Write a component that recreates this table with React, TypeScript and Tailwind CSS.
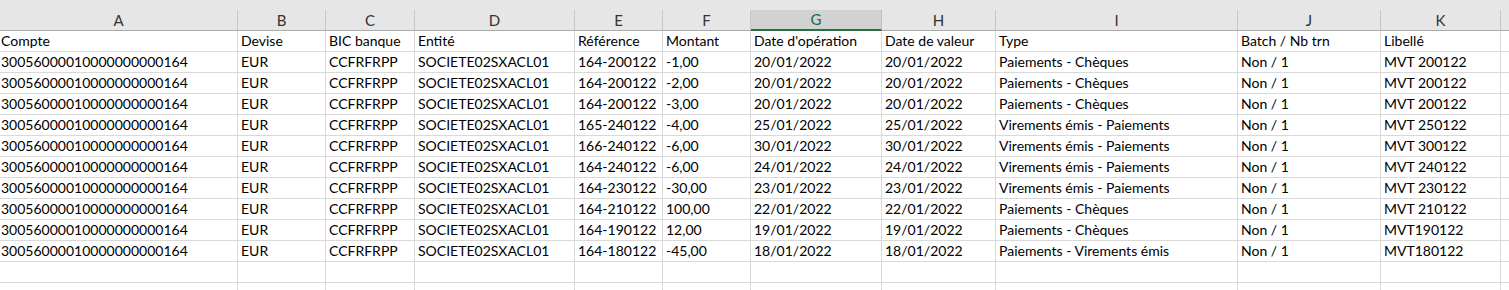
import React from 'react';

type Column = { letter: string; width: string };

const columns: Column[] = [
  { letter: 'A', width: '238px' },
  { letter: 'B', width: '88px' },
  { letter: 'C', width: '89px' },
  { letter: 'D', width: '160px' },
  { letter: 'E', width: '88px' },
  { letter: 'F', width: '88px' },
  { letter: 'G', width: '131px' },
  { letter: 'H', width: '114px' },
  { letter: 'I', width: '242px' },
  { letter: 'J', width: '143px' },
  { letter: 'K', width: '120px' },
];

const headers = [
  'Compte',
  'Devise',
  'BIC banque',
  'Entité',
  'Référence',
  'Montant',
  "Date d'opération",
  'Date de valeur',
  'Type',
  'Batch / Nb trn',
  'Libellé',
];

const ACCOUNT = '30056000010000000000164';

const movements: [string, string, string, string, string, string][] = [
  ['164-200122', '-1,00', '20/01/2022', '20/01/2022', 'Paiements - Chèques', 'MVT 200122'],
  ['164-200122', '-2,00', '20/01/2022', '20/01/2022', 'Paiements - Chèques', 'MVT 200122'],
  ['164-200122', '-3,00', '20/01/2022', '20/01/2022', 'Paiements - Chèques', 'MVT 200122'],
  ['165-240122', '-4,00', '25/01/2022', '25/01/2022', 'Virements émis - Paiements', 'MVT 250122'],
  ['166-240122', '-6,00', '30/01/2022', '30/01/2022', 'Virements émis - Paiements', 'MVT 300122'],
  ['164-240122', '-6,00', '24/01/2022', '24/01/2022', 'Virements émis - Paiements', 'MVT 240122'],
  ['164-230122', '-30,00', '23/01/2022', '23/01/2022', 'Virements émis - Paiements', 'MVT 230122'],
  ['164-210122', '100,00', '22/01/2022', '22/01/2022', 'Paiements - Chèques', 'MVT 210122'],
  ['164-190122', '12,00', '19/01/2022', '19/01/2022', 'Paiements - Chèques', 'MVT190122'],
  ['164-180122', '-45,00', '18/01/2022', '18/01/2022', 'Paiements - Virements émis', 'MVT180122'],
];

const rows: string[][] = [
  headers,
  ...movements.map(([ref, amount, opDate, valDate, type, label]) => [
    ACCOUNT,
    'EUR',
    'CCFRFRPP',
    'SOCIETE02SXACL01',
    ref,
    amount,
    opDate,
    valDate,
    type,
    'Non / 1',
    label,
  ]),
  Array(11).fill(''),
  Array(11).fill(''),
];

const gridTemplate =
  'grid grid-cols-[238px_88px_89px_160px_88px_88px_131px_114px_242px_143px_120px_1fr]';

const ColumnHeader = ({ letter, selected }: { letter: string; selected: boolean }) =>
  selected ? (
    <div className="flex h-[21px] items-center justify-center border-r border-b-2 border-r-[#bdbdbd] border-b-[#217346] bg-[#d2d2d2] text-[15px] text-[#1d6a40]">
      {letter}
    </div>
  ) : (
    <div className="flex h-[21px] items-center justify-center border-r border-b border-r-[#c6c6c6] border-b-[#ababab] text-[15px] text-[#333]">
      {letter}
    </div>
  );

export default function App() {
  return (
    <div
      className="h-[290px] w-[1509px] overflow-hidden bg-white text-black"
      style={{ fontFamily: 'Lato, "Open Sans", sans-serif' }}
    >
      <div className="h-[10px] bg-[#e6e6e6]" />
      <div className={`${gridTemplate} bg-[#e6e6e6]`}>
        {columns.map((col) => (
          <ColumnHeader key={col.letter} letter={col.letter} selected={col.letter === 'G'} />
        ))}
        <div className="h-[21px] border-b border-b-[#ababab]" />
      </div>
      {rows.map((row, r) => (
        <div key={r} className={gridTemplate}>
          {row.map((value, c) => (
            <div
              key={c}
              className={`flex h-[21px] items-end overflow-hidden whitespace-nowrap border-r border-b border-[#d9d9d9] pb-[2px] text-[14px] leading-[17px] ${
                c === 0 ? 'pl-[1px]' : 'pl-[3px]'
              }`}
            >
              {value}
            </div>
          ))}
          <div className="h-[21px] border-b border-[#d9d9d9]" />
        </div>
      ))}
    </div>
  );
}
